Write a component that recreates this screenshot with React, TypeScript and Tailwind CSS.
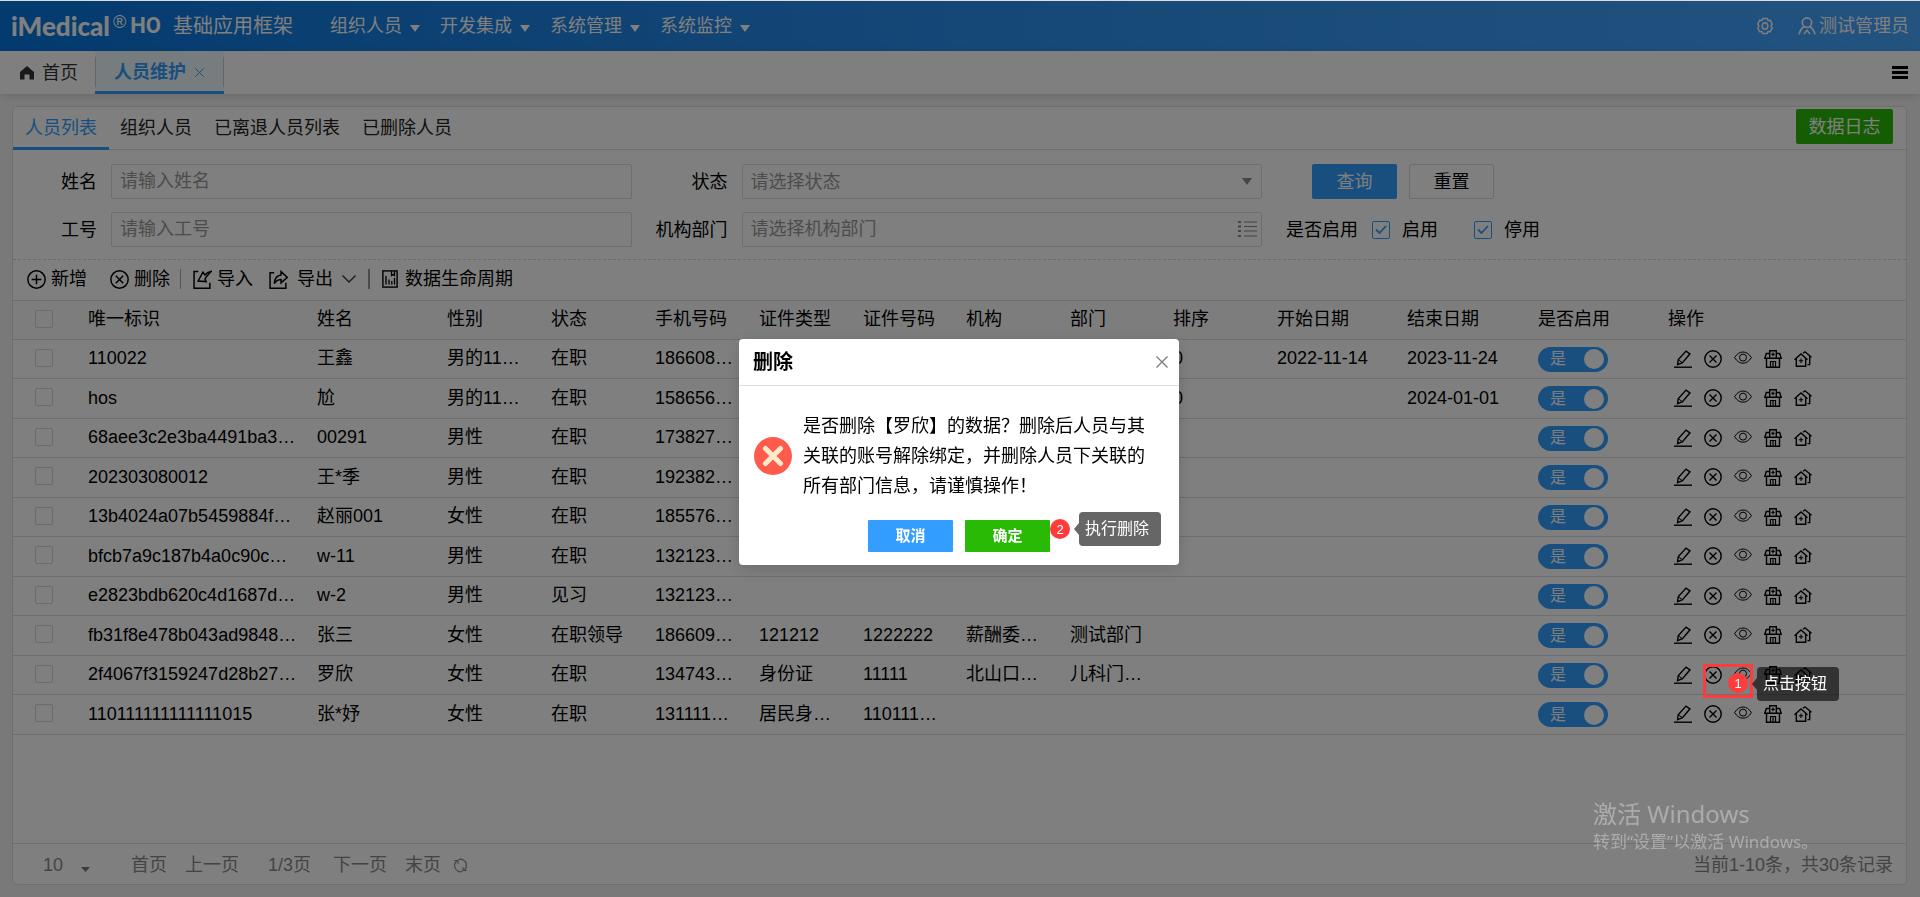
import { useState } from "react";
import type { ReactNode } from "react";

function Icon({ children, className = "size-[18px]", viewBox = "0 0 18 18" }: { children: ReactNode; className?: string; viewBox?: string }) {
  return (
    <svg viewBox={viewBox} fill="none" stroke="currentColor" strokeWidth="1.4" className={`shrink-0 ${className}`} aria-hidden="true">
      {children}
    </svg>
  );
}

const PencilIcon = () => (
  <Icon>
    <path d="M0 17.2h18" />
    <path d="M4.2 9.700 12 1.100l4 2.700-7.500 8.900-4.900 1.900z" />
    <path d="M4.400 9.900l4 2.700" strokeWidth="1" />
  </Icon>
);

const CloseCircleIcon = ({ className }: { className?: string }) => (
  <Icon className={className}>
    <circle cx="9" cy="9" r="8.2" />
    <path d="M5.500 5.500l7 7M12.500 5.500l-7 7" />
  </Icon>
);

const PlusCircleIcon = ({ className }: { className?: string }) => (
  <Icon className={className}>
    <circle cx="9" cy="9" r="8.2" />
    <path d="M9 4.4v9.2M4.4 9h9.2" />
  </Icon>
);

const EyeIcon = () => (
  <Icon>
    <path d="M.6 7.600C2.800 4 5.600 2 9 2s6.200 2 8.400 5.600C15.200 11.200 12.400 13.200 9 13.200S2.800 11.200.6 7.600z" strokeWidth="1" />
    <circle cx="9" cy="7.600" r="3.500" strokeWidth="1" />
  </Icon>
);

const HospitalIcon = () => (
  <Icon>
    <path d="M5.700 8V.8h6.600V8" />
    <path d="M9 2.600v3.600M7.300 4.400h3.400" strokeWidth="1.200" />
    <path d="M5.700 3.500H2.300L.8 8.300h16.400l-1.500-4.800h-3.400" />
    <path d="M2.500 8.300v9h13v-9" />
    <path d="M6.500 17v-5.500h5V17M9 11.500V17" strokeWidth="1.200" />
  </Icon>
);

const HouseIcon = () => (
  <Icon>
    <path d="M.5 9.800 7 3.900l6.500 5.900" />
    <path d="M2.300 8.500v7.800h9.400V8.500" />
    <path d="M7 8.500v4.400M4.800 10.700h4.400" strokeWidth="1.100" />
    <path d="M9 3.200 11 1.800l6.500 5.400M15.700 6v8.600h-2.200" />
  </Icon>
);

const ImportIcon = () => (
  <Icon className="size-[19px]">
    <path d="M5 1.500H1v15.700h15V12" />
    <path d="M17.400 1.200c-2.600.5-4.700 1.700-6.100 3.500L9.400 2 4.900 10.400l7.600.6-1.100-2.500c1.100-2 3-4.300 6-7.300z" />
  </Icon>
);

const ExportIcon = () => (
  <Icon className="size-[19px]">
    <path d="M5 2.500H1v14.700h15V12" />
    <path d="M5 13c.2-5 2.400-7.800 6.400-8.300V1.500l6 5.500-6 5.200V9C8.300 9.200 6.500 10.300 5 13z" />
  </Icon>
);

const LifecycleIcon = () => (
  <Icon className="h-[18px] w-[16px]" viewBox="0 0 16 18">
    <rect x=".9" y=".9" width="14.200" height="16.200" />
    <path d="M9.500 1v4.500l1.500-1 1.500 1V1M4 6v8.500M7 9.500v5M9.800 11v3.500M12.500 8v6.500" strokeWidth="1.300" />
  </Icon>
);

const GearIcon = () => (
  <Icon>
    <path d="M6.800 1.500h4.400l.9 2 2.200-.2 2 3.600-1.300 2.100 1.300 2.100-2 3.600-2.200-.2-.9 2H6.800l-.9-2-2.200.2-2-3.600L3 9 1.700 6.900l2-3.600 2.200.2z" />
    <ellipse cx="9" cy="9" rx="2.800" ry="3.300" />
  </Icon>
);

const UserIcon = () => (
  <Icon>
    <circle cx="9" cy="5.600" r="4.700" strokeWidth="1.600" />
    <path d="M6.200 9.500C3.600 11.400 1.600 13.700 1.200 17.500M11.800 9.500c2.600 1.900 4.600 4.200 5 8M6 17l3-3.700 3 3.700" strokeWidth="1.600" />
  </Icon>
);

const ListIcon = () => (
  <Icon className="h-[16px] w-[19px]" viewBox="0 0 19 16">
    <path d="M0 1h3M0 5.500h3M0 10h3M0 15h3" strokeWidth="1.800" />
    <path d="M6 1h13M6 5.500h13M6 10h13M6 15h13" strokeWidth="1.200" />
  </Icon>
);

const RefreshIcon = () => (
  <Icon className="size-[15px]">
    <path d="M2.200 11A7 7 0 0 1 5 3.300M6.500 1.800C10.500.6 15.600 2.800 16 8M15.800 7.500A7 7 0 0 1 13 14.700M11.500 16.200C7.500 17.400 2.800 15.200 2.200 10.500" />
    <path d="M1.500 3h4.500v4M16.500 15H12v-4" />
  </Icon>
);

const HomeIcon = () => (
  <svg viewBox="0 0 14 14" className="size-[14px] fill-[#333]" aria-hidden="true">
    <path d="M7 0 0 6V13.500h4.500V8.500h5v5H14V6z" />
  </svg>
);

const Caret = ({ className = "" }: { className?: string }) => (
  <svg viewBox="0 0 10 7" className={`h-[7px] w-[10px] fill-current ${className}`} aria-hidden="true">
    <path d="M0 0h10L5 7z" />
  </svg>
);

const Cross = ({ className }: { className: string }) => (
  <svg viewBox="0 0 12 12" fill="none" stroke="currentColor" className={className} aria-hidden="true">
    <path d="M.5.5l11 11M11.500.5l-11 11" strokeWidth="1.200" />
  </svg>
);

const menus = ["组织人员", "开发集成", "系统管理", "系统监控"];
const tabs = ["人员列表", "组织人员", "已离退人员列表", "已删除人员"];

const columns = [
  { title: "唯一标识", width: "w-[229px]" },
  { title: "姓名", width: "w-[130px]" },
  { title: "性别", width: "w-[104px]" },
  { title: "状态", width: "w-[104px]" },
  { title: "手机号码", width: "w-[104px]" },
  { title: "证件类型", width: "w-[104px]" },
  { title: "证件号码", width: "w-[103px]" },
  { title: "机构", width: "w-[104px]" },
  { title: "部门", width: "w-[103px]" },
  { title: "排序", width: "w-[104px]" },
  { title: "开始日期", width: "w-[130px]" },
  { title: "结束日期", width: "w-[131px]" },
  { title: "是否启用", width: "w-[130px]" },
  { title: "操作", width: "" },
];

const rows: string[][] = [
  ["110022", "王鑫", "男的11…", "在职", "186608…", "", "", "", "", "0", "2022-11-14", "2023-11-24"],
  ["hos", "尬", "男的11…", "在职", "158656…", "", "", "", "", "0", "", "2024-01-01"],
  ["68aee3c2e3ba4491ba3…", "00291", "男性", "在职", "173827…", "", "", "", "", "", "", ""],
  ["202303080012", "王*季", "男性", "在职", "192382…", "", "", "", "", "", "", ""],
  ["13b4024a07b5459884f…", "赵丽001", "女性", "在职", "185576…", "", "", "", "", "", "", ""],
  ["bfcb7a9c187b4a0c90c…", "w-11", "男性", "在职", "132123…", "", "", "", "", "", "", ""],
  ["e2823bdb620c4d1687d…", "w-2", "男性", "见习", "132123…", "", "", "", "", "", "", ""],
  ["fb31f8e478b043ad9848…", "张三", "女性", "在职领导", "186609…", "121212", "1222222", "薪酬委…", "测试部门", "", "", ""],
  ["2f4067f3159247d28b27…", "罗欣", "女性", "在职", "134743…", "身份证", "11111", "北山口…", "儿科门…", "", "", ""],
  ["110111111111111015", "张*妤", "女性", "在职", "131111…", "居民身…", "110111…", "", "", "", "", ""],
];

function Box({ label }: { label: string }) {
  return <input type="checkbox" aria-label={label} className="block size-[18px] appearance-none rounded-[2px] border border-[#d5d5de]" />;
}

function CheckedOption({ id, text }: { id: string; text: string }) {
  return (
    <div className="flex items-center gap-3">
      <span className="relative block size-[18px]">
        <input id={id} type="checkbox" defaultChecked className="peer block size-[18px] appearance-none rounded-[2px] border border-[#339eff]" />
        <svg viewBox="0 0 18 18" fill="none" className="pointer-events-none absolute inset-0 hidden stroke-[#339eff] peer-checked:block" aria-hidden="true">
          <path d="M4 8.500l3.500 3.500 6.500-7" strokeWidth="1.800" />
        </svg>
      </span>
      <label htmlFor={id}>{text}</label>
    </div>
  );
}

function Toggle({ label }: { label: string }) {
  return (
    <label className="flex h-[25px] w-[70px] items-center justify-between rounded-full bg-[#339eff] pr-1 pl-3 text-[16px] text-white">
      <input type="checkbox" role="switch" aria-label={label} defaultChecked className="sr-only" />
      <span className="leading-none">是</span>
      <span className="size-[20px] rounded-full bg-white" />
    </label>
  );
}

function StepBadge({ n }: { n: number }) {
  return <span className="flex size-[20px] shrink-0 items-center justify-center rounded-full bg-[#ff3b3b] text-[13px] leading-none text-white">{n}</span>;
}

function Tip({ text }: { text: string }) {
  return (
    <span className="flex items-center">
      <svg viewBox="0 0 5 12" className="h-[12px] w-[5px] fill-black/60" aria-hidden="true">
        <path d="M5 0v12L0 6z" />
      </svg>
      <span className="flex h-[34px] w-[82px] items-center rounded-[4px] bg-black/60 pl-[6px] text-[16px] whitespace-nowrap text-white">{text}</span>
    </span>
  );
}

function RowActions({ marked, name }: { marked: boolean; name: string }) {
  return (
    <div className="flex items-center gap-3 pb-px pl-[6px]">
      <button type="button" aria-label={`编辑${name}`}><PencilIcon /></button>
      <span className="relative flex">
        <button type="button" aria-label={`删除${name}`}><CloseCircleIcon /></button>
        {marked && (
          <span className="absolute -top-[2px] -left-px z-20 flex items-center">
            <span className="flex h-[34px] w-[50px] items-center justify-end border-[3px] border-[#ff3b3b] pt-[5px] pr-[2px]">
              <StepBadge n={1} />
            </span>
            <span className="absolute top-[3px] left-[49px]"><Tip text="点击按钮" /></span>
          </span>
        )}
      </span>
      <button type="button" aria-label={`查看${name}`}><EyeIcon /></button>
      <button type="button" aria-label={`机构${name}`}><HospitalIcon /></button>
      <button type="button" aria-label={`部门${name}`}><HouseIcon /></button>
    </div>
  );
}

function Header() {
  return (
    <header className="flex h-[50px] shrink-0 items-center bg-gradient-to-r from-[#0676df] via-[#2a90ee] to-[#46a6ff] px-[11px] text-white">
      <div className="flex items-center">
        <span className="font-[Lato] text-[26px] leading-none font-black">iMedical</span>
        <span className="mb-2 ml-[3px] text-[18px] leading-none">®</span>
        <span className="ml-1 font-[Roboto] text-[22px] leading-none font-bold">HO</span>
        <span className="ml-3 text-[20px]">基础应用框架</span>
      </div>
      <nav className="ml-[37px] flex gap-[18px]">
        {menus.map((m) => (
          <button key={m} type="button" className="flex w-[92px] items-center gap-2">
            <span>{m}</span>
            <Caret className="mt-1 shrink-0" />
          </button>
        ))}
      </nav>
      <div className="ml-auto flex items-center gap-6">
        <button type="button" aria-label="设置"><GearIcon /></button>
        <button type="button" className="flex items-center gap-[3px]"><UserIcon />测试管理员</button>
      </div>
    </header>
  );
}

function PageTabs() {
  return (
    <div className="relative flex h-[43px] shrink-0 items-center bg-white pr-3 shadow-[0_2px_8px_rgba(0,0,0,0.12)]">
      <a href="#home" className="flex h-full w-[95px] items-center gap-2 pl-5 text-[#333]"><HomeIcon />首页</a>
      <div className="relative flex h-full w-[129px] items-center gap-[9px] border-b-[3px] border-[#339eff] bg-[#eef8ff] pt-[2px] pl-[19px] text-[#339eff] before:absolute before:top-[6px] before:left-0 before:h-[30px] before:w-px before:bg-[#ccc] after:absolute after:top-[6px] after:right-0 after:h-[30px] after:w-px after:bg-[#ccc]">
        <a href="#staff" className="font-bold">人员维护</a>
        <button type="button" aria-label="关闭"><Cross className="size-[9px]" /></button>
      </div>
      <button type="button" aria-label="菜单" className="ml-auto flex w-[16px] flex-col gap-[2px]">
        <span className="h-[3px] bg-black" />
        <span className="h-[3px] bg-black" />
        <span className="h-[3px] bg-black" />
      </button>
    </div>
  );
}

const field = "h-[35px] w-full rounded-[2px] border border-[#dcdce0] bg-white px-2 text-[18px] text-[#999] outline-none placeholder:text-[#999]";

function SearchForm() {
  return (
    <form className="grid grid-cols-[84px_1fr_82px_1fr_630px] items-center gap-x-[14px] gap-y-[13px] border-b border-dashed border-[#d5d5d5] pt-[14px] pb-3" onSubmit={(e) => e.preventDefault()}>
      <label htmlFor="name" className="text-right">姓名</label>
      <input id="name" placeholder="请输入姓名" className={field} />
      <label htmlFor="state" className="text-right">状态</label>
      <div className="relative">
        <select id="state" className={`appearance-none ${field}`}>
          <option>请选择状态</option>
        </select>
        <Caret className="pointer-events-none absolute top-[14px] right-[10px] text-[#888]" />
      </div>
      <div className="flex gap-3 pl-9">
        <button type="submit" className="h-[35px] w-[85px] rounded-[2px] bg-[#339eff] text-white">查询</button>
        <button type="reset" className="h-[35px] w-[85px] rounded-[2px] border border-[#d9d9d9]">重置</button>
      </div>
      <label htmlFor="no" className="text-right">工号</label>
      <input id="no" placeholder="请输入工号" className={field} />
      <label htmlFor="dept" className="text-right">机构部门</label>
      <div className="relative">
        <input id="dept" placeholder="请选择机构部门" className={field} />
        <span className="pointer-events-none absolute top-[9px] right-[5px] text-[#888]"><ListIcon /></span>
      </div>
      <div className="flex items-center pl-[10px]">
        <span className="mr-[14px]">是否启用</span>
        <div className="mr-9"><CheckedOption id="on" text="启用" /></div>
        <CheckedOption id="off" text="停用" />
      </div>
    </form>
  );
}

function Toolbar() {
  return (
    <div className="flex h-[41px] shrink-0 items-center border-b border-[#dedede] pb-[2px] pl-[14px]">
      <button type="button" className="flex items-center gap-[5px]"><PlusCircleIcon className="size-[19px]" />新增</button>
      <button type="button" className="ml-[23px] flex items-center gap-[5px]"><CloseCircleIcon className="size-[19px]" />删除</button>
      <span className="ml-[10px] h-[20px] w-px bg-[#aaa]" />
      <button type="button" className="ml-3 flex items-center gap-[5px]"><ImportIcon />导入</button>
      <button type="button" className="ml-4 flex items-center gap-[9px]">
        <ExportIcon />导出
        <svg viewBox="0 0 14 8" fill="none" stroke="currentColor" strokeWidth="1.300" className="h-[8px] w-[14px] text-[#333]" aria-hidden="true"><path d="M.5.5 7 7 13.500.5" /></svg>
      </button>
      <span className="ml-3 h-[20px] w-[2px] bg-[#999]" />
      <button type="button" className="ml-3 flex items-center gap-[7px]"><LifecycleIcon />数据生命周期</button>
    </div>
  );
}

function StaffTable() {
  return (
    <table className="w-full table-fixed border-separate border-spacing-0 text-left leading-6">
      <thead>
        <tr className="h-[39px] bg-[#fafafa]">
          <th className="w-[65px] border-b border-[#dedede] pb-[2px] pl-[22px]"><Box label="全选" /></th>
          {columns.map((c) => (
            <th key={c.title} className={`border-b border-[#dedede] px-[10px] pb-[3px] font-normal whitespace-nowrap ${c.width}`}>{c.title}</th>
          ))}
        </tr>
      </thead>
      <tbody>
        {rows.map((r) => (
          <tr key={r[0]} className="odd:h-[39px] even:h-[40px]">
            <td className="border-b border-[#dedede] pb-[3px] pl-[22px]"><Box label={`选择${r[1]}`} /></td>
            {r.map((v, i) => (
              <td key={i} className="border-b border-[#dedede] pb-[2px] pl-[10px] whitespace-nowrap">{v}</td>
            ))}
            <td className="border-b border-[#dedede] pl-[10px]"><Toggle label={`启用${r[1]}`} /></td>
            <td className="border-b border-[#dedede] pl-[10px]"><RowActions name={r[1]} marked={r[1] === "罗欣"} /></td>
          </tr>
        ))}
      </tbody>
    </table>
  );
}

function Pager() {
  return (
    <footer className="mt-auto flex h-[41px] shrink-0 items-center border-t border-[#dedede] pt-[2px] pr-[13px] pl-[30px] text-[#888]">
      <div className="relative">
        <select aria-label="每页条数" className="w-[56px] appearance-none bg-transparent text-[18px] outline-none">
          <option>10</option>
        </select>
        <svg viewBox="0 0 9 5" className="pointer-events-none absolute right-[9px] bottom-[5px] h-[5px] w-[9px] fill-[#777]" aria-hidden="true"><path d="M0 0h9L4.500 5z" /></svg>
      </div>
      <a href="#first" className="ml-8">首页</a>
      <a href="#prev" className="ml-[18px]">上一页</a>
      <span className="ml-[29px]">1/3页</span>
      <a href="#next" className="ml-[22px]">下一页</a>
      <a href="#last" className="ml-[18px]">末页</a>
      <button type="button" aria-label="刷新" className="ml-3"><RefreshIcon /></button>
      <span className="ml-auto">当前1-10条，共30条记录</span>
    </footer>
  );
}

function DeleteDialog({ onClose }: { onClose: () => void }) {
  return (
    <div className="fixed inset-x-0 top-px bottom-0 z-10 flex items-center justify-center bg-black/50 pr-[2px]">
      <section role="dialog" aria-modal="true" aria-labelledby="dialog-title" className="mb-[-6px] w-[440px] rounded-[4px] bg-white shadow-[0_4px_16px_rgba(0,0,0,0.15)]">
        <div className="flex h-[47px] items-center justify-between border-b border-[#ddd] pr-[11px] pl-[14px]">
          <h2 id="dialog-title" className="text-[20px] font-bold">删除</h2>
          <button type="button" aria-label="关闭" onClick={onClose} className="text-[#777]"><Cross className="size-[12px]" /></button>
        </div>
        <div className="flex items-center gap-[11px] pt-[25px] pr-[20px] pl-[15px]">
          <svg viewBox="0 0 38 38" className="size-[38px] shrink-0" aria-hidden="true">
            <circle cx="19" cy="19" r="19" fill="#ff5a4d" />
            <path d="M11.500 11.500l15 15M26.500 11.500l-15 15" stroke="#ffeac9" strokeWidth="5" strokeLinecap="round" />
          </svg>
          <p className="w-[342px] shrink-0 leading-[30px]">
            是否删除【罗欣】的数据？删除后人员与其关联的账号解除绑定，并删除人员下关联的所有部门信息，请谨慎操作！
          </p>
        </div>
        <div className="relative mt-[19px] flex gap-3 pb-[13px] pl-[129px] text-[15px] font-bold text-white">
          <button type="button" onClick={onClose} className="h-[32px] w-[85px] rounded-[1px] bg-[#339eff]">取消</button>
          <button type="button" onClick={onClose} className="h-[32px] w-[85px] rounded-[1px] bg-[#28ba05]">确定</button>
          <span className="absolute top-[-8px] left-[311px] flex items-center gap-1 font-normal">
            <StepBadge n={2} />
            <Tip text="执行删除" />
          </span>
        </div>
      </section>
    </div>
  );
}

export default function App() {
  const [open, setOpen] = useState(true);
  return (
    <div className="flex min-h-screen flex-col border-t border-[#ddd] bg-[#f3f3f3] font-['Liberation_Sans','Noto_Sans_CJK_SC',sans-serif] text-[18px] leading-6 text-black">
      <Header />
      <PageTabs />
      <main className="my-3 mr-[13px] ml-3 flex flex-1 flex-col rounded-[5px] border border-[#dedede] bg-white">
        <div className="flex h-[43px] shrink-0 items-stretch border-b border-[#dedede]">
          {tabs.map((t, i) => (
            <a key={t} href={`#tab${i}`} className={i === 0 ? "-mb-px flex items-center border-b-[3px] border-[#339eff] px-3 pt-[2px] text-[#339eff]" : "flex items-center px-[11px] text-[#222]"}>
              {t}
            </a>
          ))}
          <button type="button" className="mt-[2px] mr-[13px] ml-auto h-[35px] w-[97px] rounded-[2px] bg-[#28ba05] text-white">数据日志</button>
        </div>
        <SearchForm />
        <Toolbar />
        <StaffTable />
        <Pager />
      </main>
      {open && <DeleteDialog onClose={() => setOpen(false)} />}
      <div className="pointer-events-none fixed right-[80px] bottom-[43px] z-30 w-[247px] font-['Noto_Sans','Noto_Sans_CJK_SC',sans-serif] text-white/35">
        <p className="text-[24px] leading-[32px]">激活 Windows</p>
        <p className="text-[17px] whitespace-nowrap">转到“设置”以激活 Windows。</p>
      </div>
    </div>
  );
}
